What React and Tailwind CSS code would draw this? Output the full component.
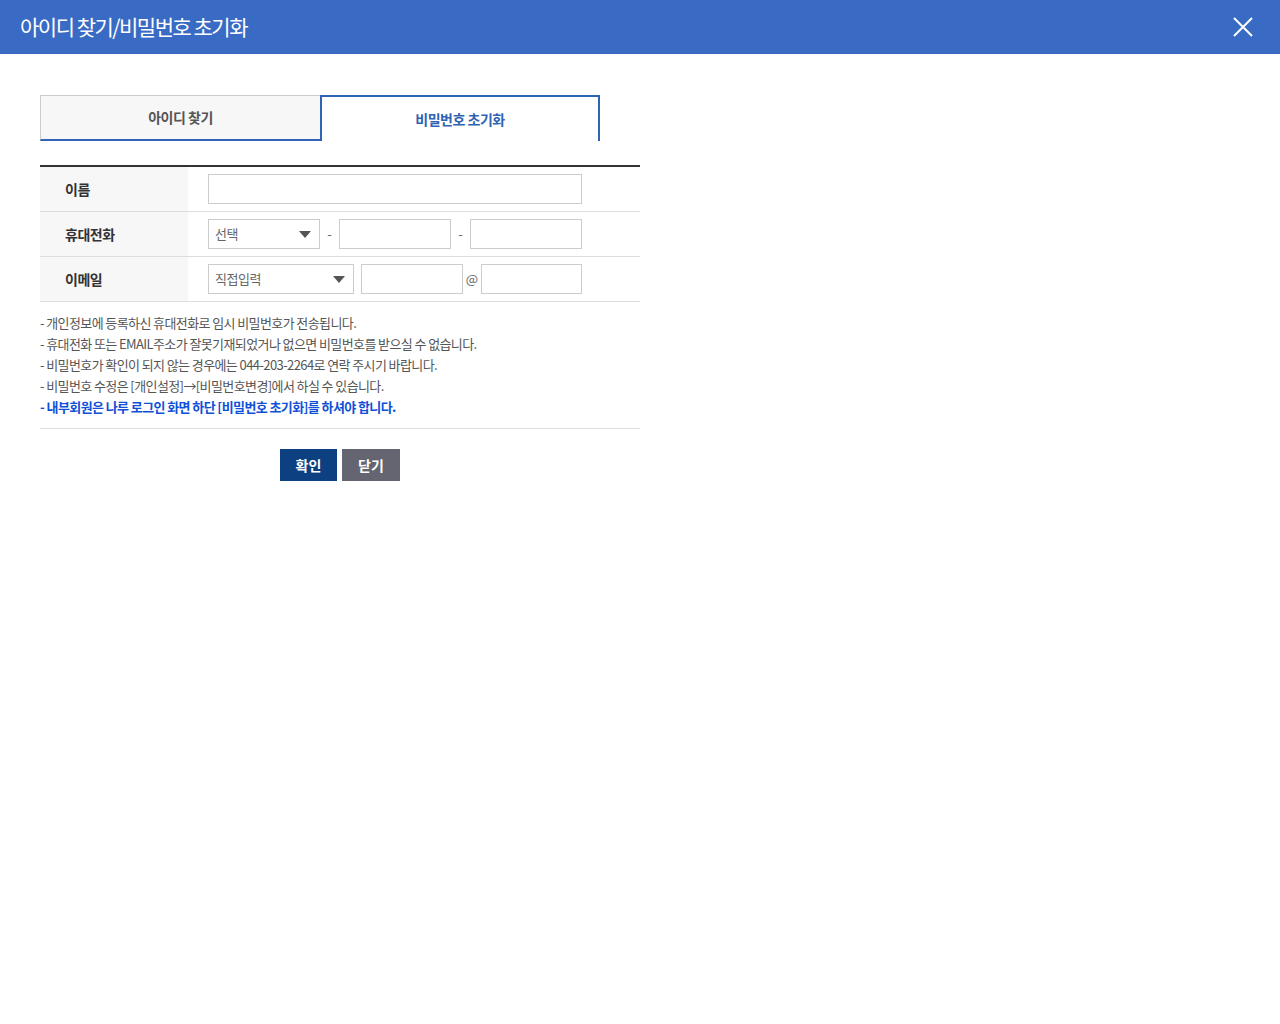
import React from "react";

const F = { fontFamily: '"Noto Sans CJK KR", "Noto Sans", sans-serif' };

function Sel({ w, label }) {
  return (
    <div className={`${w} h-[30px] border border-[#ccc] flex items-center justify-between pl-[6px] pr-[8px] text-[13px] text-[#666] bg-white`}>
      <span className="tracking-[-0.5px]">{label}</span>
      <span className="w-0 h-0 border-l-[6px] border-r-[6px] border-t-[7px] border-l-transparent border-r-transparent border-t-[#555]"></span>
    </div>
  );
}
const Inp = ({ w }) => <div className={`${w} h-[30px] border border-[#ccc] bg-white`}></div>;

function Row({ label, children }) {
  return (
    <div className="flex h-[45px] border-b border-[#ddd]">
      <div className="w-[148px] bg-[#f7f7f7] flex items-center pl-[25px] text-[14px] font-bold text-[#333] tracking-[-0.5px]">{label}</div>
      <div className="flex items-center pl-[20px] flex-1">{children}</div>
    </div>
  );
}

export default function App() {
  return (
    <div style={F} className="w-[1280px] h-[1024px] bg-white">
      <div className="h-[54px] bg-[#3a6bc4] flex items-center justify-between pl-[20px] pr-[26px]">
        <span className="text-white text-[21px] tracking-[-1.5px]">아이디 찾기/비밀번호 초기화</span>
        <svg width="22" height="22" viewBox="0 0 22 22" stroke="white" strokeWidth="2"><path d="M2 2L20 20M20 2L2 20" /></svg>
      </div>
      <div className="pl-[40px] pt-[41px] w-[600px] box-content">
        <div className="flex h-[46px]">
          <div className="w-[280px] bg-[#f7f7f7] border-t border-l border-[#ccc] border-b-2 border-b-[#2f63b3] flex items-center justify-center text-[14px] font-bold text-[#555] tracking-[-0.5px]">아이디 찾기</div>
          <div className="w-[280px] border-2 border-b-0 border-[#2f63b3] flex items-center justify-center text-[14px] font-bold text-[#2f63b3] tracking-[-0.5px]">비밀번호 초기화</div>
        </div>
        <div className="mt-[24px] border-t-2 border-[#333]">
          <Row label="이름"><Inp w="w-[374px]" /></Row>
          <Row label="휴대전화">
            <Sel w="w-[112px]" label="선택" />
            <span className="w-[19px] text-center text-[#666] text-[13px]">-</span>
            <Inp w="w-[112px]" />
            <span className="w-[19px] text-center text-[#666] text-[13px]">-</span>
            <Inp w="w-[112px]" />
          </Row>
          <Row label="이메일">
            <Sel w="w-[146px]" label="직접입력" />
            <div className="w-[7px]"></div>
            <Inp w="w-[102px]" />
            <span className="w-[18px] text-center text-[#666] text-[13px]">@</span>
            <Inp w="w-[101px]" />
          </Row>
        </div>
        <div className="pt-[10px] pb-[11px] border-b border-[#ddd] text-[13px] leading-[21px] text-[#555] tracking-[-0.6px]">
          <p>- 개인정보에 등록하신 휴대전화로 임시 비밀번호가 전송됩니다.</p>
          <p>- 휴대전화 또는 EMAIL주소가 잘못기재되었거나 없으면 비밀번호를 받으실 수 없습니다.</p>
          <p>- 비밀번호가 확인이 되지 않는 경우에는 044-203-2264로 연락 주시기 바랍니다.</p>
          <p>- 비밀번호 수정은 [개인설정]→[비밀번호변경]에서 하실 수 있습니다.</p>
          <p className="text-[#1050d8] font-bold">- 내부회원은 나루 로그인 화면 하단 [비밀번호 초기화]를 하셔야 합니다.</p>
        </div>
        <div className="flex justify-center gap-[5px] mt-[20px]">
          <button className="w-[57px] h-[32px] bg-[#0d4080] text-white text-[14px] font-bold">확인</button>
          <button className="w-[58px] h-[32px] bg-[#646570] text-white text-[14px] font-bold">닫기</button>
        </div>
      </div>
    </div>
  );
}
